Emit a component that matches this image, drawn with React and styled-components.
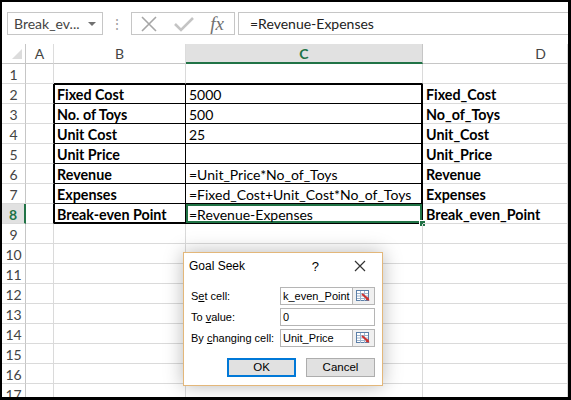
import React from "react";
import styled, { createGlobalStyle } from "styled-components";

const GREEN = "#217346";
const GRID = "#dadada";

const GlobalStyle = createGlobalStyle`
	body {
		margin: 0;
		background: #ffffff;
		font-family: "Lato", "Liberation Sans", sans-serif;
	}
`;

const rows = [
	["", "", ""],
	["Fixed Cost", "5000", "Fixed_Cost"],
	["No. of Toys", "500", "No_of_Toys"],
	["Unit Cost", "25", "Unit_Cost"],
	["Unit Price", "", "Unit_Price"],
	["Revenue", "=Unit_Price*No_of_Toys", "Revenue"],
	["Expenses", "=Fixed_Cost+Unit_Cost*No_of_Toys", "Expenses"],
	["Break-even Point", "=Revenue-Expenses", "Break_even_Point"],
	...Array.from({ length: 9 }, () => ["", "", ""])
];

const RefIcon = () => (
	<svg width="15" height="12" viewBox="0 0 15 12">
		<rect x="0.5" y="0.5" width="12" height="10" fill="#ffffff" stroke="#5b7fa8" />
		<path d="M1 3.5h11M1 6h11M1 8.5h11M4.5 1v10M8.5 1v10" stroke="#9db3cc" strokeWidth="1" />
		<path d="M6 4l6 5" stroke="#d0312d" strokeWidth="2" />
		<path d="M13.5 10.5l-4-0.5 2.5-3z" fill="#d0312d" />
	</svg>
);

const App = () => (
	<>
		<GlobalStyle />
		<Frame>
			<Toolbar>
				<NameBox>
					Break_ev...
					<Caret />
				</NameBox>
				<Dots>⋮</Dots>
				<FormulaButtons>
					<svg width="18" height="18" viewBox="0 0 18 18">
						<path d="M2 2l14 14M16 2L2 16" stroke="#a6a6a6" strokeWidth="1.6" />
					</svg>
					<svg width="20" height="18" viewBox="0 0 20 18">
						<path d="M1 9l6 6L19 3" stroke="#c4c4c4" strokeWidth="2.6" fill="none" />
					</svg>
					<Fx>fx</Fx>
				</FormulaButtons>
				<FormulaInput>=Revenue-Expenses</FormulaInput>
			</Toolbar>

			<Sheet>
				<Corner>
					<svg width="10" height="10" viewBox="0 0 10 10">
						<path d="M10 0v10H0z" fill="#dcdcdc" />
					</svg>
				</Corner>
				<ColHead>A</ColHead>
				<ColHead>B</ColHead>
				<ColHead active>C</ColHead>
				<ColHead right>D</ColHead>

				{rows.map(([b, c, d], i) => {
					const n = i + 1;
					const inTable = n >= 2 && n <= 8;
					return (
						<React.Fragment key={n}>
							<RowHead active={n === 8}>{n}</RowHead>
							<Cell edgeRight={inTable} />
							<Cell
								bold
								table={inTable}
								edgeBottom={n === 1}
								outerLeft={inTable}
								outerTop={n === 2}
								outerBottom={n === 8}
							>
								{b}
							</Cell>
							<Cell
								table={inTable}
								edgeBottom={n === 1}
								outerRight={inTable}
								outerTop={n === 2}
								outerBottom={n === 8}
								selected={n === 8}
							>
								{c}
								{n === 8 && <Handle />}
							</Cell>
							<Cell bold>{d}</Cell>
						</React.Fragment>
					);
				})}
			</Sheet>

			<Dialog>
				<TitleBar>
					<span>Goal Seek</span>
					<TitleIcons>
						<span>?</span>
						<svg width="12" height="12" viewBox="0 0 12 12">
							<path d="M1 1l10 10M11 1L1 11" stroke="#333" strokeWidth="1.2" />
						</svg>
					</TitleIcons>
				</TitleBar>
				<DialogBody>
					<Field>
						<Label>
							S<u>e</u>t cell:
						</Label>
						<InputRow>
							<TextBox>k_even_Point</TextBox>
							<RefButton>
								<RefIcon />
							</RefButton>
						</InputRow>
					</Field>
					<Field>
						<Label>
							To <u>v</u>alue:
						</Label>
						<InputRow>
							<TextBox wide>0</TextBox>
						</InputRow>
					</Field>
					<Field>
						<Label>
							By <u>c</u>hanging cell:
						</Label>
						<InputRow>
							<TextBox>Unit_Price</TextBox>
							<RefButton>
								<RefIcon />
							</RefButton>
						</InputRow>
					</Field>
					<Buttons>
						<Button primary>OK</Button>
						<Button>Cancel</Button>
					</Buttons>
				</DialogBody>
			</Dialog>
		</Frame>
	</>
);

export default App;

const Frame = styled.div`
	position: relative;
	width: 571px;
	height: 400px;
	box-sizing: border-box;
	border: 2px solid #000000;
	border-right-width: 3px;
	border-bottom-width: 3px;
	overflow: hidden;
	background: #ffffff;
`;

const Toolbar = styled.div`
	display: flex;
	align-items: flex-start;
	height: 42px;
	box-sizing: border-box;
	padding: 10px 0 0 5px;
	font-family: "Lato", "Liberation Sans", sans-serif;
`;

const NameBox = styled.div`
	position: relative;
	width: 96px;
	height: 23px;
	box-sizing: border-box;
	border: 1px solid #c6c6c6;
	padding-left: 6px;
	font-size: 14px;
	line-height: 21px;
	color: #444444;
`;

const Caret = styled.span`
	position: absolute;
	right: 6px;
	top: 9px;
	border-left: 4px solid transparent;
	border-right: 4px solid transparent;
	border-top: 4px solid #707070;
`;

const Dots = styled.div`
	width: 28px;
	text-align: center;
	color: #a0a0a0;
	font-size: 14px;
	line-height: 23px;
`;

const FormulaButtons = styled.div`
	display: flex;
	align-items: center;
	justify-content: space-between;
	width: 104px;
	height: 23px;
	box-sizing: border-box;
	border: 1px solid #c6c6c6;
	padding: 0 10px 0 8px;
`;

const Fx = styled.span`
	font-family: "Liberation Serif", serif;
	font-style: italic;
	font-size: 19px;
	color: #707070;
	line-height: 20px;
`;

const FormulaInput = styled.div`
	flex: 1;
	height: 23px;
	margin-left: 3px;
	box-sizing: border-box;
	border: 1px solid #c6c6c6;
	border-right: none;
	padding-left: 11px;
	font-size: 14px;
	line-height: 21px;
	color: #222222;
`;

const Sheet = styled.div`
	display: grid;
	grid-template-columns: 24px 28px 132px 237px 1fr;
	grid-auto-rows: 20px;
	font-family: "Lato", "Liberation Sans", sans-serif;
	font-size: 14px;
	color: #000000;
`;

const Corner = styled.div`
	display: flex;
	align-items: flex-end;
	justify-content: flex-end;
	padding: 0 3px 4px 0;
	border-right: 1px solid #c6c6c6;
	border-bottom: 1px solid #c6c6c6;
`;

const ColHead = styled.div`
	display: flex;
	align-items: center;
	justify-content: ${p => (p.right ? "flex-end" : "center")};
	padding-right: ${p => (p.right ? "21px" : "0")};
	box-sizing: border-box;
	border-right: 1px solid ${p => (p.active ? "#c6c6c6" : "#dcdcdc")};
	border-bottom: ${p => (p.active ? `2px solid ${GREEN}` : "1px solid #c6c6c6")};
	background: ${p => (p.active ? "#e1e1e1" : "#ffffff")};
	color: ${p => (p.active ? GREEN : "#444444")};
	font-weight: ${p => (p.active ? 700 : 400)};
	font-size: 14px;
`;

const RowHead = styled.div`
	display: flex;
	align-items: center;
	justify-content: center;
	box-sizing: border-box;
	padding-top: 1px;
	border-right: ${p => (p.active ? `2px solid ${GREEN}` : "1px solid #c6c6c6")};
	border-bottom: 1px solid ${GRID};
	background: ${p => (p.active ? "#e1e1e1" : "#ffffff")};
	color: ${p => (p.active ? GREEN : "#444444")};
	font-weight: ${p => (p.active ? 700 : 400)};
	font-size: 14px;
`;

const shadows = p => {
	if (p.selected) return `inset 0 0 0 2px ${GREEN}`;
	const list = [];
	if (p.outerLeft) list.push("inset 1px 0 0 #000");
	if (p.outerTop) list.push("inset 0 1px 0 #000");
	if (p.outerRight) list.push("inset -1px 0 0 #000");
	if (p.outerBottom) list.push("inset 0 -1px 0 #000");
	return list.length ? list.join(", ") : "none";
};

const Cell = styled.div`
	position: relative;
	box-sizing: border-box;
	padding: 1px 0 0 3px;
	white-space: nowrap;
	line-height: 19px;
	font-size: ${p => (p.bold ? "14.3px" : "14px")};
	font-weight: ${p => (p.bold ? 700 : 400)};
	border-right: 1px solid ${p => (p.table || p.edgeRight ? "#000" : GRID)};
	border-bottom: 1px solid ${p => (p.table || p.edgeBottom ? "#000" : GRID)};
	box-shadow: ${shadows};
`;

const Handle = styled.span`
	position: absolute;
	right: -4px;
	bottom: -4px;
	width: 5px;
	height: 5px;
	background: ${GREEN};
	border: 1px solid #ffffff;
`;

const Dialog = styled.div`
	position: absolute;
	left: 181px;
	top: 250px;
	width: 200px;
	height: 134px;
	box-sizing: border-box;
	border: 1px solid #e3b77a;
	background: #ffffff;
	box-shadow: 0 0 18px rgba(0, 0, 0, 0.28);
	font-family: "Liberation Sans", sans-serif;
	font-size: 11px;
	color: #000000;
`;

const TitleBar = styled.div`
	display: flex;
	align-items: center;
	justify-content: space-between;
	height: 26px;
	padding: 0 16px 0 5px;
	font-size: 12px;
`;

const TitleIcons = styled.div`
	display: flex;
	align-items: center;
	gap: 35px;
	font-size: 13px;
`;

const DialogBody = styled.div`
	display: flex;
	flex-direction: column;
	gap: 3px;
	padding: 8px 7px 0 7px;
`;

const Field = styled.div`
	display: flex;
	align-items: center;
	justify-content: space-between;
	height: 18px;
`;

const Label = styled.span`
	white-space: nowrap;
`;

const InputRow = styled.div`
	display: flex;
	width: 95px;
	height: 18px;
`;

const TextBox = styled.div`
	flex: ${p => (p.wide ? 1 : "0 0 73px")};
	box-sizing: border-box;
	border: 1px solid #b5b5b5;
	padding-left: 2px;
	line-height: 16px;
	overflow: hidden;
	white-space: nowrap;
	font-size: 11px;
`;

const RefButton = styled.div`
	display: flex;
	align-items: center;
	justify-content: center;
	flex: 1;
	box-sizing: border-box;
	border: 1px solid #b5b5b5;
	border-left: none;
	background: #f0f0f0;
`;

const Buttons = styled.div`
	display: flex;
	justify-content: flex-end;
	gap: 10px;
	margin-top: 8px;
`;

const Button = styled.div`
	width: 69px;
	height: 19px;
	box-sizing: border-box;
	border: ${p => (p.primary ? "2px solid #0078d7" : "1px solid #adadad")};
	background: #e1e1e1;
	text-align: center;
	line-height: ${p => (p.primary ? "15px" : "17px")};
	font-size: 11.5px;
`;
